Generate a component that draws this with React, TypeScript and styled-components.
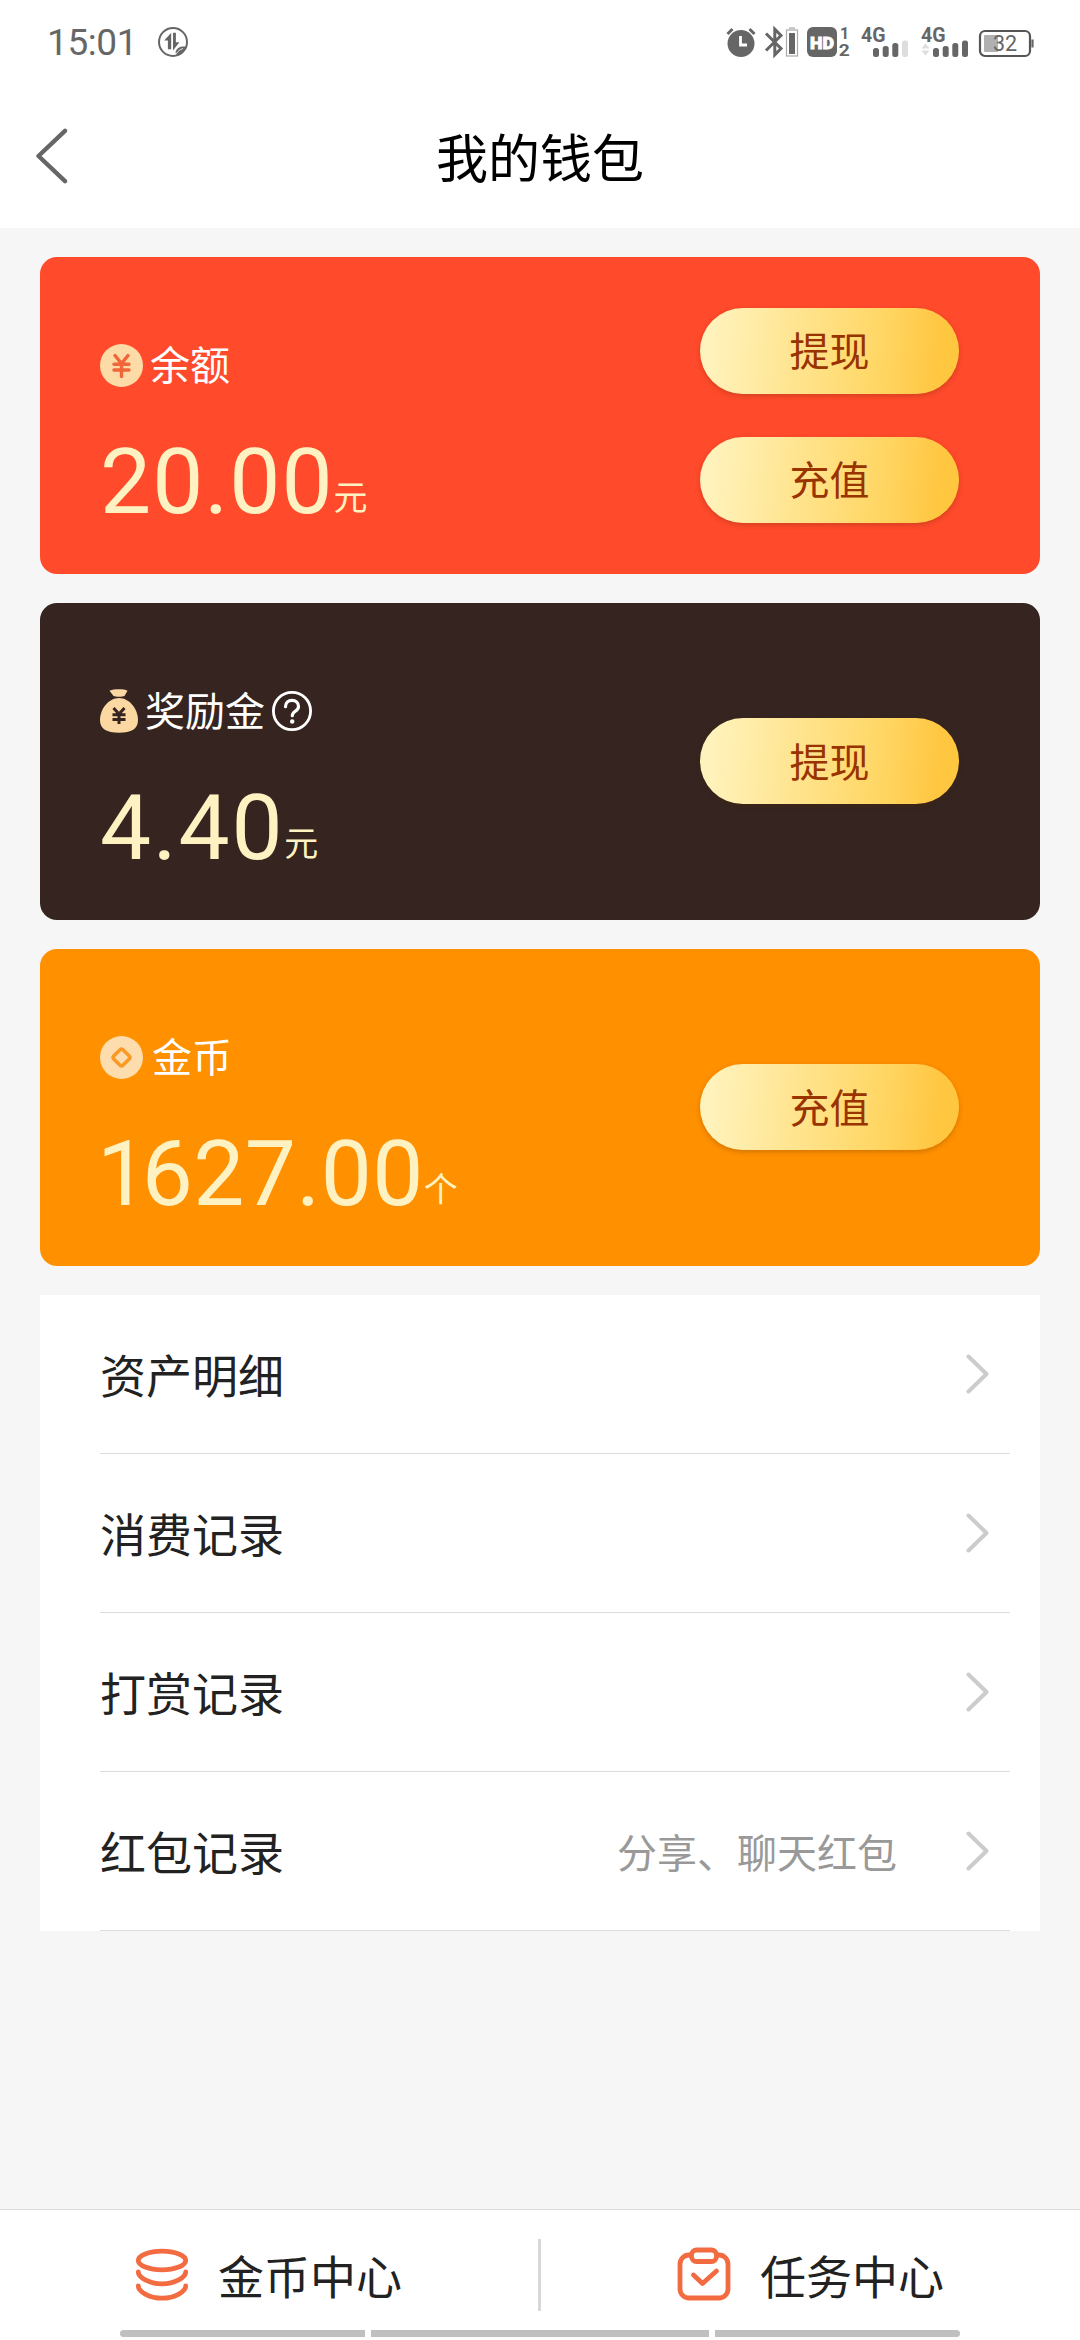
import React from "react";
import styled, { createGlobalStyle } from "styled-components";

const GlobalStyle = createGlobalStyle`
  *, *::before, *::after { box-sizing: border-box; }
  html, body { margin: 0; padding: 0; background: #f6f6f6; }
  body { font-family: "Noto Sans CJK SC", sans-serif; color: #222; }
`;

const Screen = styled.div`
  position: relative;
  display: flex;
  flex-direction: column;
  width: 1080px;
  height: 2340px;
  overflow: hidden;
  background: #f6f6f6;
`;

const StatusBar = styled.div`
  display: flex;
  align-items: center;
  height: 84px;
  padding: 0 46px 0 47px;
  background: #fff;
  color: #666;
`;

const Clock = styled.span`
  width: 91px;
  padding-top: 1px;
  font-family: Roboto, sans-serif;
  font-size: 37px;
  line-height: 44px;
  letter-spacing: -0.4px;
  white-space: nowrap;
`;

const StatusIcons = styled.div`
  display: flex;
  align-items: center;
  margin-left: auto;
`;

const StatusIcon = styled.svg<{ $gap?: number }>`
  display: block;
  flex: none;
  overflow: visible;
  margin-left: ${(p) => p.$gap ?? 0}px;
`;

const TitleBar = styled.header`
  display: grid;
  grid-template-columns: 120px 1fr 120px;
  align-items: center;
  height: 144px;
  background: #fff;
`;

const BackButton = styled.button`
  display: flex;
  align-items: center;
  height: 100px;
  padding: 0 0 0 35px;
  border: 0;
  background: none;
`;

const Title = styled.h1`
  margin: 0;
  padding-bottom: 1px;
  text-align: center;
  font-size: 52px;
  font-weight: 400;
  line-height: 60px;
  color: #000;
`;

const Content = styled.main`
  display: flex;
  flex-direction: column;
  flex: 1;
  gap: 29px;
  padding: 29px 40px 0;
`;

const Card = styled.section<{ $color: string }>`
  display: flex;
  justify-content: space-between;
  height: 317px;
  padding: 0 81px 0 60px;
  border-radius: 17px;
  background: ${(p) => p.$color};
`;

const CardInfo = styled.div`
  display: flex;
  flex-direction: column;
  padding-top: 80px;
`;

const CardLabel = styled.div<{ $gap: number }>`
  display: flex;
  align-items: center;
  gap: ${(p) => p.$gap}px;
  height: 56px;
  color: #fff;
`;

const CardName = styled.span`
  padding-bottom: 3px;
  font-size: 40px;
  line-height: 53px;
`;

const Amount = styled.div<{ $tracking: number }>`
  height: 106px;
  margin-top: 36px;
  font-family: Roboto, "Noto Sans CJK SC", sans-serif;
  font-size: 91px;
  line-height: 106px;
  letter-spacing: ${(p) => p.$tracking}px;
  white-space: nowrap;
  color: #fff2c2;
`;

const NarrowOne = styled.span`
  margin-left: -3px;
  letter-spacing: -6.5px;
`;

const Unit = styled.span`
  vertical-align: 3px;
  font-size: 34px;
  line-height: 34px;
  letter-spacing: 0;
`;

const CardActions = styled.div`
  display: flex;
  flex-direction: column;
  justify-content: center;
  gap: 43px;
  padding-bottom: 1px;
`;

const PillButton = styled.button`
  width: 259px;
  height: 86px;
  padding: 0 0 3px;
  border: 0;
  border-radius: 43px;
  background: linear-gradient(95deg, #fff3bd 4%, #ffd766 68%, #ffc640 92%);
  box-shadow: 0 2px 5px rgba(80, 40, 0, 0.26);
  font: inherit;
  font-size: 40px;
  line-height: 60px;
  color: #993300;
`;

const Menu = styled.nav`
  display: flex;
  flex-direction: column;
  height: 636px;
  background: #fff;
`;

const MenuRow = styled.a`
  display: flex;
  align-items: center;
  flex: 1;
  margin: 0 30px 0 60px;
  padding: 0 20px 0 0;
  border-bottom: 1px solid #dcdcdc;
`;

const MenuLabel = styled.span`
  flex: 1;
  padding-bottom: 3px;
  font-size: 46px;
  line-height: 60px;
`;

const MenuHint = styled.span`
  margin-right: 69px;
  font-size: 40px;
  line-height: 56px;
  color: #999;
`;

const Footer = styled.footer`
  display: grid;
  grid-template-columns: 538px 3px 1fr;
  align-items: center;
  height: 131px;
  border-top: 1px solid #dcdcdc;
  background: #fff;
`;

const FooterTab = styled.a<{ $inset: number }>`
  display: flex;
  align-items: center;
  gap: 24px;
  padding-left: ${(p) => p.$inset}px;
`;

const FooterLabel = styled.span`
  padding-bottom: 3px;
  font-size: 46px;
  line-height: 60px;
`;

const FooterDivider = styled.i`
  height: 72px;
  background: #d8d8d8;
`;

const GestureBar = styled.div`
  position: absolute;
  left: 120px;
  bottom: 3px;
  display: grid;
  grid-template-columns: 245px 338px 245px;
  gap: 6px;
  height: 7px;
  border-radius: 4px;
  overflow: hidden;
`;

const GestureSegment = styled.i`
  background: #bfbfbf;
`;

const DataSaverIcon = () => (
  <StatusIcon $gap={20} width="30" height="30" viewBox="0 0 30 30" fill="none" stroke="currentColor">
    <circle cx="15" cy="15" r="14" strokeWidth="2" />
    <path d="M13.200 5.800V22.300H9.900V13.500H6.200z" fill="currentColor" stroke="none" />
    <path d="M15 5.800h2.900V15.300h3.500L15 23.600z" fill="currentColor" stroke="none" />
    <path d="M17.500 25.500c1-5 5-6.500 10-6-1.500 5-4.500 8-9 8.500z" fill="currentColor" stroke="none" />
    <path d="M18 27c2-3 4-4.500 7-5.500" stroke="#fff" strokeWidth="0.8" />
  </StatusIcon>
);

const AlarmIcon = () => (
  <StatusIcon width="30" height="32" viewBox="0 0 30 32" fill="none" stroke="currentColor">
    <circle cx="15" cy="17.500" r="13.500" fill="currentColor" stroke="none" />
    <path d="M1.500 8L6.500 3M28.500 8l-5-5" strokeWidth="3" />
    <path d="M14.500 10v9h6.500" stroke="#fff" strokeWidth="2.8" />
  </StatusIcon>
);

const BluetoothIcon = () => (
  <StatusIcon $gap={9} width="33" height="32" viewBox="0 0 33 32" fill="none" stroke="currentColor">
    <path d="M1 7.500L16 22.500l-6.200 6.300V3.200L16 9.500 1 24.500" strokeWidth="3" />
    <path d="M25 3.500V2h4v1.500" stroke="#bbb" strokeWidth="1.500" />
    <rect x="21.500" y="4" width="11" height="26" stroke="#aaa" strokeWidth="1.200" />
    <rect x="24" y="7" width="6" height="21" fill="currentColor" stroke="none" />
  </StatusIcon>
);

const HdIcon = () => (
  <StatusIcon $gap={9} width="43" height="32" viewBox="0 0 43 32" fill="currentColor">
    <rect x="0" y="1" width="30" height="30" rx="6" />
    <text x="15" y="22.500" textAnchor="middle" fill="#fff" stroke="#fff" strokeWidth="0.800" fontFamily="Roboto" fontWeight="900" fontSize="17" textLength="24" lengthAdjust="spacingAndGlyphs">HD</text>
    <text x="37.500" y="12.500" textAnchor="middle" fontFamily="Roboto" fontWeight="700" fontSize="16">1</text>
    <text x="37.200" y="30" textAnchor="middle" fontFamily="Roboto" fontWeight="700" fontSize="16" textLength="11" lengthAdjust="spacingAndGlyphs">2</text>
  </StatusIcon>
);

const bars = [
  { x: 12, h: 9 },
  { x: 21.7, h: 11 },
  { x: 31.3, h: 14 },
  { x: 41, h: 16.5 },
];

const SignalIcon = ({ level, arrows, gap }: { level: number; arrows?: boolean; gap: number }) => (
  <StatusIcon $gap={gap} width="48" height="32" viewBox="0 0 48 32" fill="currentColor">
    <text x="0" y="15.500" fontFamily="Roboto" fontWeight="700" fontSize="20.500" textLength="24.500" lengthAdjust="spacingAndGlyphs">4G</text>
    {arrows && <path d="M0.500 22.500l4-5 4 5zM0.500 24.500h8l-4 5z" fill="#ddd" />}
    {bars.map((bar, i) => (
      <rect key={bar.x} x={bar.x} y={31 - bar.h} width="6" height={bar.h} rx="2.500" fill={i < level ? "currentColor" : "#ddd"} />
    ))}
  </StatusIcon>
);

const BatteryIcon = () => (
  <StatusIcon $gap={10} width="55" height="32" viewBox="0 0 55 32" fill="none">
    <rect x="1" y="5" width="50" height="25" rx="5" stroke="#555" strokeWidth="2.200" />
    <rect x="5" y="9" width="14" height="17" rx="1" fill="#b0b0b0" />
    <path d="M53.500 13.500v8" stroke="#666" strokeWidth="2.200" />
    <text x="26" y="25.300" textAnchor="middle" fill="#666" fontFamily="Roboto" fontSize="21.500">32</text>
  </StatusIcon>
);

const BackIcon = () => (
  <svg width="34" height="56" viewBox="0 0 34 56" fill="none" stroke="#666" strokeWidth="4.400" strokeLinecap="round" strokeLinejoin="round">
    <path d="M30 2.800L3.500 28 30 53.200" />
  </svg>
);

const ChevronIcon = () => (
  <svg width="24" height="42" viewBox="0 0 24 42" fill="none" stroke="#ccc" strokeWidth="4" strokeLinecap="round" strokeLinejoin="round">
    <path d="M2.500 3.500L20.500 21 2.500 38.500" />
  </svg>
);

const BalanceIcon = () => (
  <svg width="43" height="43" viewBox="0 0 43 43" fill="none">
    <circle cx="21.500" cy="21.500" r="21.500" fill="#fcdba6" />
    <path d="M15 11.500l6.500 8 6.500-8M14 20.300h15M14 26h15M21.500 19.500V32.500" stroke="#f0653a" strokeWidth="3.400" strokeLinecap="round" />
  </svg>
);

const MoneyBagIcon = () => (
  <svg width="38" height="44" viewBox="0 0 38 44" fill="none">
    <path d="M9.500 1.800C12 .3 15.500.2 19 .2s6.500 0 8.500 1.600L24.500 7c-2 .9-9 .9-11 0z" fill="#fbd7a2" />
    <path d="M19 9c10.500 0 19 11 19 22 0 9-6.500 12.700-19 12.700S0 40 0 31C0 20 8.500 9 19 9z" fill="#fbd7a2" />
    <path d="M13.500 19l5.500 6 5.500-6M12.500 25.800h13M12.500 30.500h13M19 25v10" stroke="#35241f" strokeWidth="3" />
  </svg>
);

const CoinIcon = () => (
  <svg width="43" height="43" viewBox="0 0 43 43" fill="none">
    <circle cx="21.500" cy="21.500" r="21.500" fill="#fddcae" />
    <rect x="15" y="15" width="13" height="13" rx="2" transform="rotate(45 21.500 21.500)" stroke="#fa9a26" strokeWidth="3.500" />
  </svg>
);

const HelpIcon = () => (
  <svg width="40" height="40" viewBox="0 0 40 40" fill="none" stroke="#fff" strokeLinecap="round">
    <circle cx="20" cy="20" r="18.600" strokeWidth="2.800" />
    <path d="M13.500 15.700c0-4 2.900-6.400 6.500-6.400s6.500 2.400 6.500 6.100c0 5-6.200 4.800-6.200 9.300" strokeWidth="3.200" />
    <circle cx="20.200" cy="30.500" r="2.200" fill="#fff" stroke="none" />
  </svg>
);

const CoinStackIcon = () => (
  <svg width="64" height="64" viewBox="0 0 64 64" fill="none" stroke="#f26b41" strokeWidth="4.800" strokeLinecap="round">
    <ellipse cx="32" cy="17.500" rx="23.700" ry="9.300" />
    <path d="M8.300 29c0 5.200 10.600 11.800 23.700 11.800S55.700 34.200 55.700 29" />
    <path d="M8.300 43c0 5.200 10.600 12.200 23.700 12.200S55.700 48.200 55.700 43" />
  </svg>
);

const TaskIcon = () => (
  <svg width="64" height="64" viewBox="0 0 64 64" fill="none" stroke="#f26b41" strokeWidth="4.800" strokeLinecap="round" strokeLinejoin="round">
    <path d="M19 12h-2a9 9 0 0 0-9 9v25a9 9 0 0 0 9 9h30a9 9 0 0 0 9-9V21a9 9 0 0 0-9-9h-2" />
    <rect x="19.500" y="7" width="25" height="11.500" rx="5" />
    <path d="M21.500 32l9 8.500L44.500 28" />
  </svg>
);

const wallets = [
  { color: "#ff4a2b", icon: <BalanceIcon />, gap: 7, label: "余额", amount: "20.00", tracking: 1, unit: "元", actions: ["提现", "充值"] },
  { color: "#35241f", icon: <MoneyBagIcon />, gap: 7, label: "奖励金", help: true, amount: "4.40", tracking: 1.7, unit: "元", actions: ["提现"] },
  { color: "#ff9000", icon: <CoinIcon />, gap: 9, label: "金币", amount: "1627.00", tracking: 0.4, unit: "个", actions: ["充值"] },
];

const menuItems = [
  { label: "资产明细" },
  { label: "消费记录" },
  { label: "打赏记录" },
  { label: "红包记录", hint: "分享、聊天红包" },
];

export default function App() {
  return (
    <Screen>
      <GlobalStyle />
      <StatusBar>
        <Clock>15:01</Clock>
        <DataSaverIcon />
        <StatusIcons>
          <AlarmIcon />
          <BluetoothIcon />
          <HdIcon />
          <SignalIcon level={3} gap={11} />
          <SignalIcon level={4} arrows gap={12} />
          <BatteryIcon />
        </StatusIcons>
      </StatusBar>
      <TitleBar>
        <BackButton aria-label="返回">
          <BackIcon />
        </BackButton>
        <Title>我的钱包</Title>
      </TitleBar>
      <Content>
        {wallets.map((w) => (
          <Card key={w.label} $color={w.color}>
            <CardInfo>
              <CardLabel $gap={w.gap}>
                {w.icon}
                <CardName>{w.label}</CardName>
                {w.help && <HelpIcon />}
              </CardLabel>
              <Amount $tracking={w.tracking}>
                {w.amount.startsWith("1") ? (
                  <>
                    <NarrowOne>1</NarrowOne>
                    {w.amount.slice(1)}
                  </>
                ) : (
                  w.amount
                )}
                <Unit>{w.unit}</Unit>
              </Amount>
            </CardInfo>
            <CardActions>
              {w.actions.map((a) => (
                <PillButton key={a}>{a}</PillButton>
              ))}
            </CardActions>
          </Card>
        ))}
        <Menu>
          {menuItems.map((m) => (
            <MenuRow key={m.label}>
              <MenuLabel>{m.label}</MenuLabel>
              {m.hint && <MenuHint>{m.hint}</MenuHint>}
              <ChevronIcon />
            </MenuRow>
          ))}
        </Menu>
      </Content>
      <Footer>
        <FooterTab $inset={130}>
          <CoinStackIcon />
          <FooterLabel>金币中心</FooterLabel>
        </FooterTab>
        <FooterDivider />
        <FooterTab $inset={131}>
          <TaskIcon />
          <FooterLabel>任务中心</FooterLabel>
        </FooterTab>
      </Footer>
      <GestureBar>
        <GestureSegment />
        <GestureSegment />
        <GestureSegment />
      </GestureBar>
    </Screen>
  );
}
